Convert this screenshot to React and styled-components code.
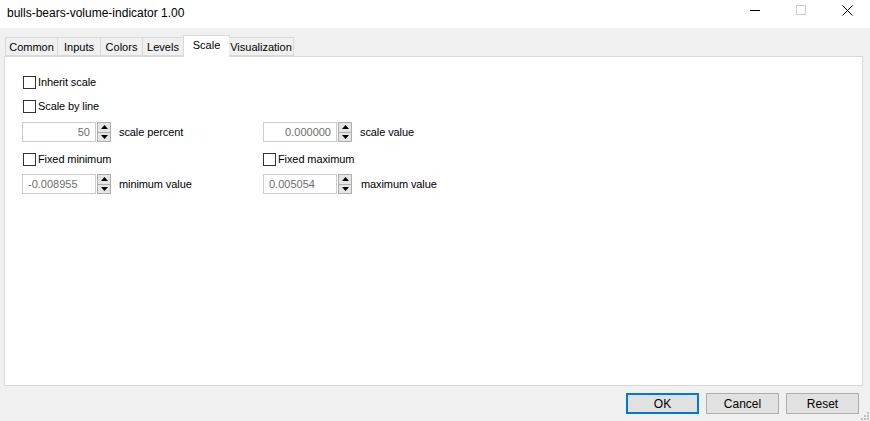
import styled, { createGlobalStyle } from "styled-components";

const Global = createGlobalStyle`
  html, body { margin: 0; padding: 0; background: #f0f0f0; }
  body { font-family: Tahoma, "Liberation Sans", Arial, sans-serif; }
`;

const Window = styled.div`
  position: relative;
  width: 870px;
  height: 421px;
  background: #f0f0f0;
  display: flex;
  flex-direction: column;
  overflow: hidden;
`;

const TitleBar = styled.div`
  height: 28px;
  background: #fff;
  display: flex;
  align-items: center;
  justify-content: space-between;
`;

const Title = styled.div`
  padding-left: 7px;
  font-family: "Liberation Sans", Arial, sans-serif;
  font-size: 12px;
  color: #000;
  margin-top: -2px;
`;

const Controls = styled.div`
  display: flex;
  height: 28px;
`;

const Ctrl = styled.div`
  width: 46px;
  height: 28px;
  display: flex;
  align-items: center;
  justify-content: center;
  margin-top: -4px;
`;

const Tabs = styled.div`
  display: flex;
  align-items: flex-end;
  height: 21px;
  margin-top: 7px;
  padding-left: 5px;
  position: relative;
  z-index: 1;
`;

const Tab = styled.div`
  box-sizing: border-box;
  width: ${(p) => p.$w}px;
  height: ${(p) => (p.$active ? "22px" : "19px")};
  margin-bottom: ${(p) => (p.$active ? "-1px" : "0")};
  padding-top: 2px;
  margin-left: ${(p) => (p.$active ? "-1px" : "0")};
  margin-right: ${(p) => (p.$active ? "-1px" : "0")};
  border: 1px solid #d9d9d9;
  border-bottom: ${(p) => (p.$active ? "none" : "1px solid #d9d9d9")};
  border-left: ${(p) => (p.$first || p.$active ? "1px solid #d9d9d9" : "none")};
  background: ${(p) => (p.$active ? "#fff" : "#f0f0f0")};
  font-size: 11px;
  line-height: 15px;
  color: #000;
  text-align: center;
  white-space: nowrap;
`;

const Panel = styled.div`
  box-sizing: border-box;
  margin: 0 7px 0 4px;
  height: 330px;
  background: #fff;
  border: 1px solid #d9d9d9;
  padding: 13px 0 0 17px;
`;

const Grid = styled.div`
  display: grid;
  grid-template-columns: 241px auto;
  grid-template-rows: 24px 24px 28px 26px 24px;
  align-items: center;
`;

const Cell = styled.div`
  display: flex;
  align-items: center;
  grid-column: ${(p) => p.$col || "auto"};
  padding-left: ${(p) => (p.$cb ? "1px" : "0")};
`;

const Box = styled.span`
  box-sizing: border-box;
  width: 13px;
  height: 13px;
  border: 1px solid #333;
  background: #fff;
  margin-right: 2px;
`;

const Text = styled.span`
  font-size: 11px;
  color: #000;
  letter-spacing: -0.1px;
  margin-left: ${(p) => p.$gap || "0"};
`;

const Field = styled.div`
  box-sizing: border-box;
  width: 74px;
  height: 20px;
  border: 1px solid #cccccc;
  background: #fff;
  color: #6d6d6d;
  font-size: 11px;
  display: flex;
  align-items: center;
  justify-content: ${(p) => (p.$right ? "flex-end" : "flex-start")};
  padding: 0 5px;
`;

const Spin = styled.div`
  display: flex;
  flex-direction: column;
  margin-left: 1px;
  width: 14px;
  height: 20px;
`;

const SpinHalf = styled.div`
  box-sizing: border-box;
  flex: 1;
  border: 1px solid #adadad;
  border-top: ${(p) => (p.$down ? "none" : "1px solid #adadad")};
  background: #e5e5e5;
  display: flex;
  align-items: center;
  justify-content: center;
`;

const Footer = styled.div`
  display: flex;
  justify-content: flex-end;
  gap: 7px;
  padding: 7px 11px 0 0;
`;

const Button = styled.div`
  box-sizing: border-box;
  width: 73px;
  height: 21px;
  background: #e1e1e1;
  border: ${(p) => (p.$primary ? "2px solid #0078d7" : "1px solid #adadad")};
  font-size: 12px;
  display: flex;
  align-items: center;
  justify-content: center;
  color: #000;
`;

const Grip = styled.svg`
  position: absolute;
  right: 1px;
  bottom: 1px;
`;

function Arrow({ down }) {
  return (
    <svg width="7" height="4" viewBox="0 0 7 4">
      <path d={down ? "M0 0h7L3.5 4z" : "M3.5 0L7 4H0z"} fill="#000" />
    </svg>
  );
}

function Check({ label }) {
  return (
    <>
      <Box />
      <Text>{label}</Text>
    </>
  );
}

function SpinField({ value, right, label, gap }) {
  return (
    <>
      <Field $right={right}>{value}</Field>
      <Spin>
        <SpinHalf>
          <Arrow />
        </SpinHalf>
        <SpinHalf $down>
          <Arrow down />
        </SpinHalf>
      </Spin>
      <Text $gap={gap}>{label}</Text>
    </>
  );
}

const tabs = [
  { name: "Common", w: 53 },
  { name: "Inputs", w: 43 },
  { name: "Colors", w: 42 },
  { name: "Levels", w: 41 },
  { name: "Scale", w: 47, active: true },
  { name: "Visualization", w: 65 },
];

export default function App() {
  return (
    <Window>
      <Global />
      <TitleBar>
        <Title>bulls-bears-volume-indicator 1.00</Title>
        <Controls>
          <Ctrl>
            <svg width="10" height="10" viewBox="0 0 10 10">
              <path d="M0 5.5h10" stroke="#000" strokeWidth="1" />
            </svg>
          </Ctrl>
          <Ctrl>
            <svg width="10" height="10" viewBox="0 0 10 10">
              <rect x="0.5" y="0.5" width="9" height="9" fill="none" stroke="#cccccc" />
            </svg>
          </Ctrl>
          <Ctrl>
            <svg width="11" height="11" viewBox="0 0 11 11">
              <path d="M0.5 0.5l10 10M10.5 0.5l-10 10" stroke="#000" strokeWidth="1" />
            </svg>
          </Ctrl>
        </Controls>
      </TitleBar>
      <Tabs>
        {tabs.map((t, i) => (
          <Tab key={t.name} $w={t.w} $first={i === 0} $active={t.active}>
            {t.name}
          </Tab>
        ))}
      </Tabs>
      <Panel>
        <Grid>
          <Cell $col="1 / 3" $cb>
            <Check label="Inherit scale" />
          </Cell>
          <Cell $col="1 / 3" $cb>
            <Check label="Scale by line" />
          </Cell>
          <Cell>
            <SpinField value="50" right label="scale percent" gap="8px" />
          </Cell>
          <Cell>
            <SpinField value="0.000000" right label="scale value" gap="8px" />
          </Cell>
          <Cell $cb>
            <Check label="Fixed minimum" />
          </Cell>
          <Cell>
            <Check label="Fixed maximum" />
          </Cell>
          <Cell>
            <SpinField value="-0.008955" label="minimum value" gap="8px" />
          </Cell>
          <Cell>
            <SpinField value="0.005054" label="maximum value" gap="9px" />
          </Cell>
        </Grid>
      </Panel>
      <Footer>
        <Button $primary>OK</Button>
        <Button>Cancel</Button>
        <Button>Reset</Button>
      </Footer>
      <Grip width="8" height="8" viewBox="0 0 8 8">
        <rect x="6" y="0" width="2" height="2" fill="#bfbfbf" />
        <rect x="3" y="3" width="2" height="2" fill="#bfbfbf" />
        <rect x="6" y="3" width="2" height="2" fill="#bfbfbf" />
        <rect x="0" y="6" width="2" height="2" fill="#bfbfbf" />
        <rect x="3" y="6" width="2" height="2" fill="#bfbfbf" />
        <rect x="6" y="6" width="2" height="2" fill="#bfbfbf" />
      </Grip>
    </Window>
  );
}
